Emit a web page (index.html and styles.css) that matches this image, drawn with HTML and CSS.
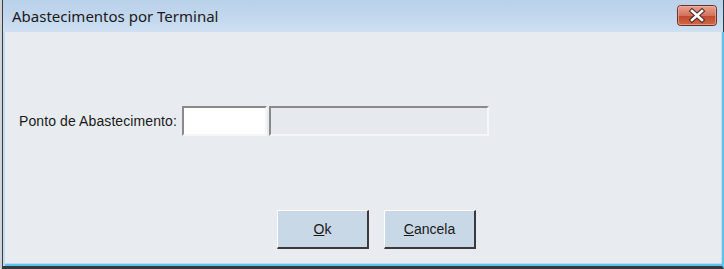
FILE: index.html
```html
<!DOCTYPE html>
<html lang="pt">
  <head>
    <meta charset="UTF-8" />
    <meta name="viewport" content="width=device-width, initial-scale=1.0" />
    <title>Abastecimentos por Terminal</title>
    <link rel="stylesheet" href="styles.css">
  </head>
  <body>
    <div class="frame">
      <!-- barra de título -->
      <div class="titlebar">
        <span class="title">Abastecimentos por Terminal</span>
        <a href="javascript:;" class="close">
          <svg width="40" height="21" viewBox="0 0 40 21">
            <defs>
              <linearGradient id="cg" x1="0" y1="0" x2="0" y2="1">
                <stop offset="0" stop-color="#e9a593" />
                <stop offset="0.5" stop-color="#d4715c" />
                <stop offset="0.55" stop-color="#c24a30" />
                <stop offset="1" stop-color="#d06a46" />
              </linearGradient>
            </defs>
            <rect x="0.5" y="0.5" width="39" height="20" rx="3" fill="url(#cg)" stroke="#6b3128" />
            <rect x="1.5" y="1.5" width="37" height="18" rx="2" fill="none" stroke="#f0b8a8" stroke-opacity="0.6" />
            <path d="M15 6 L25 15 M25 6 L15 15" stroke="#4a2a28" stroke-width="4.6" stroke-linecap="square" />
            <path d="M15 6 L25 15 M25 6 L15 15" stroke="#ffffff" stroke-width="2.6" stroke-linecap="square" />
          </svg>
        </a>
      </div>

      <!-- conteúdo -->
      <div class="body">
        <div class="field-row">
          <label class="label">Ponto de Abastecimento:</label>
          <input class="code" type="text" />
          <input class="desc" type="text" disabled />
        </div>

        <div class="buttons">
          <button class="btn"><u>O</u>k</button>
          <button class="btn"><u>C</u>ancela</button>
        </div>
      </div>
    </div>
  </body>
</html>
```

FILE: styles.css
```css
* {
  margin: 0;
  padding: 0;
  box-sizing: border-box;
}

body {
  width: 724px;
  height: 269px;
  background: #c8ccd0;
  font-family: "Liberation Sans", Arial, sans-serif;
}

.frame {
  display: flex;
  flex-direction: column;
  width: 724px;
  height: 269px;
  border-left: 2px solid #cfd3d8;
}

.titlebar {
  display: flex;
  align-items: flex-start;
  justify-content: space-between;
  height: 32px;
  padding: 5px 6px 0 9px;
  border-left: 1px solid #3c3c3c;
  border-right: 1px solid #2e3a44;
  background: linear-gradient(#b9d1ea, #c4d8ee 60%, #cfe0f2);
}

.title {
  margin-top: 1px;
  font-family: "Noto Sans", "Open Sans", sans-serif;
  font-size: 15px;
  color: #1a1a1a;
}

.close {
  display: block;
  width: 40px;
  height: 21px;
}

.body {
  flex: 1;
  display: flex;
  flex-direction: column;
  background: #e8ecf0;
  border-left: 1px solid #3c3c3c;
  border-right: 2px solid #5cc4ec;
  border-bottom: 3px solid #33393d;
  box-shadow: inset 2px 0 0 #c4daf0, inset 0 -2px 0 #5cc4ec, inset -1px -3px 0 #c4daf0;
}

.field-row {
  display: flex;
  align-items: center;
  margin-top: 74px;
  padding-left: 16px;
}

.label {
  margin-right: 5px;
  font-size: 14px;
  letter-spacing: 0.1px;
  color: #1a1a1a;
}

.code,
.desc {
  height: 30px;
  border-top: 2px solid #8a8a8a;
  border-left: 2px solid #8a8a8a;
  border-bottom: 2px solid #f4f6f8;
  border-right: 2px solid #f4f6f8;
  outline: none;
}

.code {
  width: 85px;
  background: #ffffff;
}

.desc {
  width: 220px;
  margin-left: 2px;
  background: #e6eaee;
}

.buttons {
  display: flex;
  gap: 15px;
  margin-top: 74px;
  padding-left: 274px;
}

.btn {
  width: 92px;
  height: 39px;
  background: #c9d8e7;
  border-top: 1px solid #ffffff;
  border-left: 1px solid #ffffff;
  border-right: 2px solid #3a3a3a;
  border-bottom: 2px solid #3a3a3a;
  font-family: "Liberation Sans", Arial, sans-serif;
  font-size: 14px;
  color: #1a1a1a;
}
```
